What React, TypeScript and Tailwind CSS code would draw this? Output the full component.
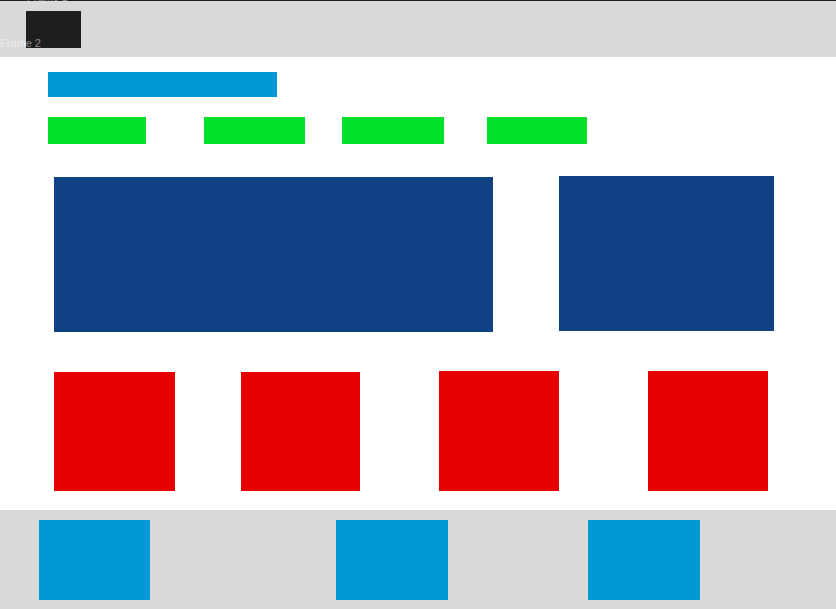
export default function App() {
  return (
    <div className="relative w-[836px] h-[609px] overflow-hidden bg-white font-['Liberation_Sans',Arial,sans-serif]">
      {/* header */}
      <header className="relative h-[57px] border-t border-[#1e1e1e] bg-[#d9d9d9] pt-[10px] pl-[26px]">
        <div className="w-[55px] h-[37px] bg-[#1e1e1e]" />
        <span className="absolute left-[27px] top-[-9px] text-[11px] leading-none text-[#8a8a8a]">Frame 1</span>
        <span className="absolute left-0 top-[37px] text-[11px] leading-none text-white/50">Frame 2</span>
      </header>

      {/* main */}
      <main className="flex h-[453px] flex-col">
        <div className="ml-[48px] mt-[15px] h-[25px] w-[229px] bg-[#0099d6]" />

        <div className="mt-[20px] flex h-[27px]">
          <div className="ml-[48px] w-[98px] bg-[#00e02a]" />
          <div className="ml-[58px] w-[101px] bg-[#00e02a]" />
          <div className="ml-[37px] w-[102px] bg-[#00e02a]" />
          <div className="ml-[43px] w-[100px] bg-[#00e02a]" />
        </div>

        <div className="mt-[32px] flex items-start">
          <div className="ml-[54px] mt-px h-[155px] w-[439px] bg-[#0f4184]" />
          <div className="ml-[66px] h-[155px] w-[215px] bg-[#0f4184]" />
        </div>

        <div className="mt-[39px] flex items-start">
          <div className="ml-[54px] mt-px h-[119px] w-[121px] bg-[#e60000]" />
          <div className="ml-[66px] mt-px h-[119px] w-[119px] bg-[#e60000]" />
          <div className="ml-[79px] h-[120px] w-[120px] bg-[#e60000]" />
          <div className="ml-[89px] h-[120px] w-[120px] bg-[#e60000]" />
        </div>
      </main>

      {/* footer */}
      <footer className="flex h-[99px] items-start bg-[#d9d9d9] pt-[10px]">
        <div className="ml-[39px] h-[80px] w-[111px] bg-[#0099d6]" />
        <div className="ml-[186px] h-[80px] w-[112px] bg-[#0099d6]" />
        <div className="ml-[140px] h-[80px] w-[112px] bg-[#0099d6]" />
      </footer>
    </div>
  );
}
